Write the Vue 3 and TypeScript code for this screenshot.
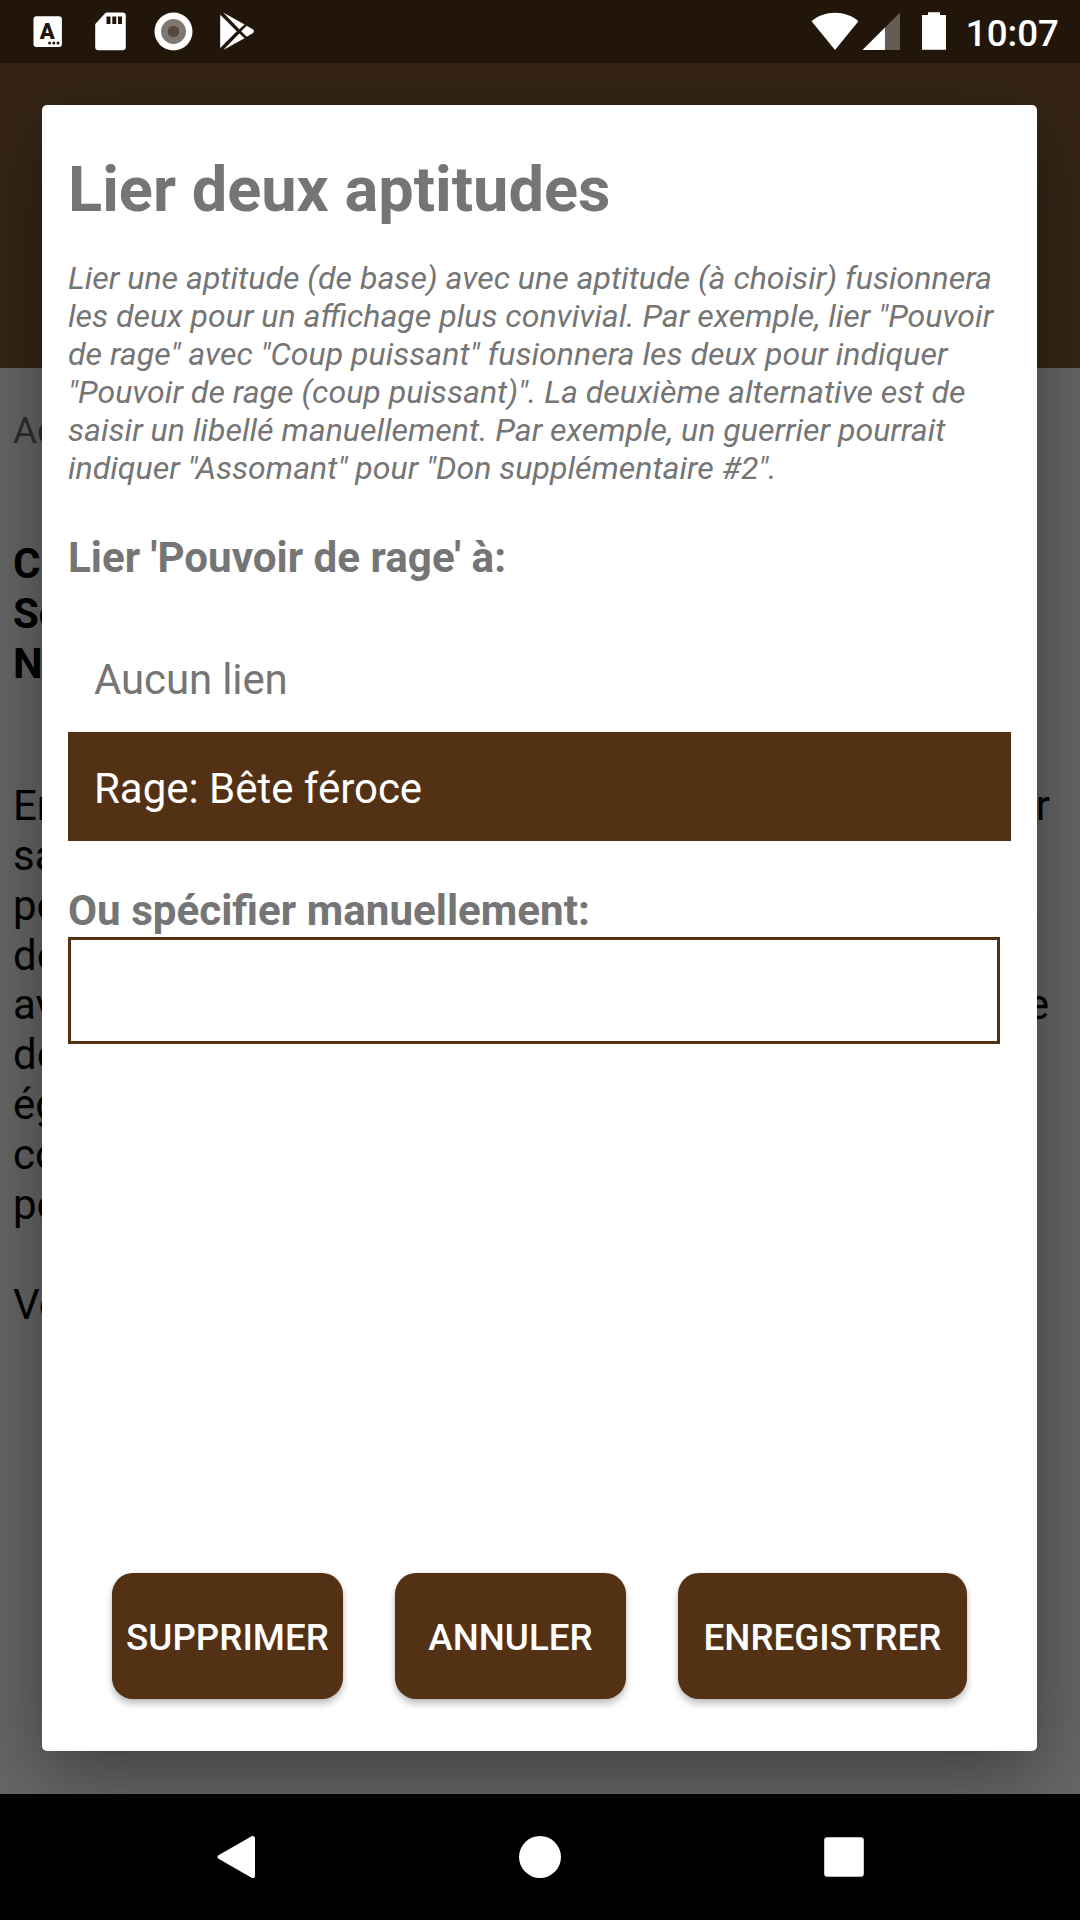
<script setup lang="ts">
import { ref } from 'vue'

interface PageLine {
  start: string
  end?: string
  inset?: string
}

const headings: string[] = ['C', 'So', 'No']

const lines: PageLine[] = [
  { start: 'En', end: 'r', inset: 'inset-r' },
  { start: 'sa' },
  { start: 'po', end: 's', inset: 'inset-s' },
  { start: 'de' },
  { start: 'av', end: 'e', inset: 'inset-e' },
  { start: 'de' },
  { start: 'ég' },
  { start: 'co' },
  { start: 'po' },
  { start: '' },
  { start: 'Vo' },
]

const options: string[] = ['Aucun lien', 'Rage: Bête féroce']
const selected = ref(1)
const manual = ref('')
</script>

<template>
  <div class="screen">
    <header class="status">
      <div class="status-left">
        <svg class="i-lang" width="30" height="32" viewBox="0 0 30 32">
          <rect x="0.5" y="0.3" width="28.4" height="30.6" rx="3" fill="#fff" />
          <text x="14.3" y="22.800" text-anchor="middle" class="lang-letter">A</text>
          <g fill="#22160b">
            <circle cx="16.6" cy="27" r="1.5" />
            <circle cx="20.8" cy="27" r="1.5" />
            <circle cx="25" cy="27" r="1.5" />
          </g>
        </svg>
        <svg class="i-sd" width="31" height="39" viewBox="0 0 31 39">
          <path d="M12 .5H27.500a3.300 3.300 0 0 1 3.300 3.300V35a3.300 3.300 0 0 1-3.300 3.300H3.500A3.300 3.300 0 0 1 .2 35V13q0-1 .8-1.800L10.200 1.300Q11 .5 12 .5Z" fill="#fff" />
          <path d="M11.500 4.500h4v7.500h-4zM17.300 4.500h4v7.500h-4zM23 4.500h4v7.500h-4z" fill="#22160b" />
        </svg>
        <svg class="i-disc" width="39" height="39" viewBox="0 0 39 39">
          <circle cx="19.500" cy="19.500" r="19" fill="#fff" />
          <circle cx="19.500" cy="19.500" r="12.500" fill="#7f7771" />
          <circle cx="19.500" cy="19.500" r="5.800" fill="#544a42" />
        </svg>
        <svg class="i-play" width="35" height="39" viewBox="0 0 35 39" fill="#fff">
          <path d="M.2 2.700 16.800 19.300.2 35.900Z" />
          <path d="M3.200.5 24.600 12.400 19.300 17.200Z" />
          <path d="M3.200 38.100 24.600 26.200 19.300 21.400Z" />
          <path d="M26.700 13.800 32.600 17.300Q35.300 19.300 32.600 21.300L26.700 24.800 21.200 19.300Z" />
        </svg>
      </div>
      <div class="status-right">
        <svg class="i-wifi" width="48" height="38" viewBox="0 0 48 38">
          <path d="M24 38 .6 9.300C7 3.700 15 .8 24 .8s17 2.900 23.400 8.500Z" fill="#fff" />
        </svg>
        <svg class="i-signal" width="38" height="38" viewBox="0 0 38 38">
          <path d="M38 .5V38H.5Z" fill="#655c54" />
          <path d="M23 15.500V38H.5Z" fill="#fff" />
        </svg>
        <svg class="i-battery" width="24" height="38" viewBox="0 0 24 38">
          <path d="M6 .2H18V3H24V37.800H0V3H6Z" fill="#fff" />
        </svg>
        <span class="clock">10:07</span>
      </div>
    </header>

    <main class="page">
      <div class="toolbar"></div>
      <p class="caption">Ac</p>
      <div class="headings">
        <strong v-for="h in headings" :key="h">{{ h }}</strong>
      </div>
      <div class="prose">
        <div v-for="(line, i) in lines" :key="i" class="line" :class="line.inset">
          <span>{{ line.start }}</span>
          <span v-if="line.end">{{ line.end }}</span>
        </div>
      </div>
      <section class="dialog">
        <h1>Lier deux aptitudes</h1>
        <p class="help">
          Lier une aptitude (de base) avec une aptitude (à choisir) fusionnera<br />
          les deux pour un affichage plus convivial. Par exemple, lier "Pouvoir<br />
          de rage" avec "Coup puissant" fusionnera les deux pour indiquer<br />
          "Pouvoir de rage (coup puissant)". La deuxième alternative est de<br />
          saisir un libellé manuellement. Par exemple, un guerrier pourrait<br />
          indiquer "Assomant" pour "Don supplémentaire #2".
        </p>
        <h2>Lier 'Pouvoir de rage' à:</h2>
        <ul class="options">
          <li
            v-for="(option, i) in options"
            :key="option"
            :class="{ active: i === selected }"
            @click="selected = i"
          >{{ option }}</li>
        </ul>
        <h2 class="manual-label">Ou spécifier manuellement:</h2>
        <input v-model="manual" class="manual" type="text" />
        <div class="actions">
          <button type="button">SUPPRIMER</button>
          <button type="button">ANNULER</button>
          <button type="button" class="wide">ENREGISTRER</button>
        </div>
      </section>
    </main>

    <nav class="navbar">
      <svg width="40" height="44" viewBox="0 0 40 44">
        <path d="M1.500 20.300 34.600 1.200Q38 0 38 3.500V40.500Q38 44 34.600 42.800L1.500 23.700Q-.6 22 1.500 20.300Z" fill="#fff" />
      </svg>
      <svg width="44" height="42" viewBox="0 0 44 42">
        <circle cx="21" cy="21" r="21" fill="#fff" />
      </svg>
      <svg width="40" height="40" viewBox="0 0 40 40">
        <rect x="0.2" y="0.2" width="39.600" height="39.600" rx="3" fill="#fff" />
      </svg>
    </nav>
  </div>
</template>

<style>
body {
  margin: 0;
  background: #000;
}
</style>

<style scoped>
.screen {
  width: 1080px;
  height: 1920px;
  display: flex;
  flex-direction: column;
  overflow: hidden;
  font-family: Roboto, "Noto Sans", sans-serif;
}
h1, h2, p, ul {
  margin: 0;
  padding: 0;
}
svg {
  display: block;
  flex: none;
}
.status {
  height: 63px;
  flex: none;
  background: #22160b;
  display: flex;
  justify-content: space-between;
  box-sizing: border-box;
  padding: 12px 21px 0 33px;
}
.status-left,
.status-right {
  display: flex;
  align-items: flex-start;
}
.i-lang { margin-top: 4px; }
.i-sd { margin-left: 32px; }
.i-disc { margin-left: 28px; }
.i-play { margin-left: 27px; }
.i-signal { margin-left: 3px; }
.i-battery { margin-left: 22px; }
.lang-letter {
  font-size: 22px;
  font-weight: 900;
  fill: #22160b;
}
.clock {
  margin: 0 0 0 20px;
  font-size: 36.75px;
  line-height: 43px;
  font-weight: 500;
  color: #fff;
}
.page {
  flex: 1;
  position: relative;
  overflow: hidden;
  background: #666;
  color: #000;
  font-size: 42px;
  line-height: 50px;
}
.toolbar {
  height: 305px;
  background: #362515;
}
.caption {
  margin-top: 41px;
  padding-left: 13px;
  font-size: 36.75px;
  line-height: 43px;
  color: #2e2e2e;
}
.headings {
  margin-top: 87px;
  padding-left: 13px;
  display: flex;
  flex-direction: column;
}
.prose {
  margin-top: 92px;
  padding-left: 13px;
}
.line {
  display: flex;
  justify-content: space-between;
  height: 49.87px;
}
.inset-r { padding-right: 30px; }
.inset-s { padding-right: 41px; }
.inset-e { padding-right: 31px; }
.dialog {
  position: absolute;
  top: 42px;
  left: 42px;
  width: 995px;
  height: 1646px;
  box-sizing: border-box;
  padding: 47px 26px 52px;
  border-radius: 5px;
  background: #fff;
  box-shadow: 0 20px 76px rgba(0, 0, 0, 0.4);
  color: #757575;
  display: flex;
  flex-direction: column;
}
h1 {
  font-size: 63.1px;
  line-height: 74px;
  font-weight: 700;
}
.help {
  margin-top: 33px;
  font-size: 32.09px;
  line-height: 38px;
  font-style: italic;
  white-space: nowrap;
}
h2 {
  margin-top: 46px;
  font-size: 42.15px;
  line-height: 50px;
  font-weight: 700;
}
.options {
  margin-top: 40px;
  list-style: none;
}
.options li {
  padding: 32px 26px 27px;
  letter-spacing: -0.14px;
}
.options li.active {
  background: #533114;
  color: #fff;
  letter-spacing: -0.02px;
}
.manual-label {
  margin-top: 45px;
}
.manual {
  margin: 1px 11px 0 0;
  height: 107px;
  box-sizing: border-box;
  border: 3px solid #533114;
  border-radius: 0;
  padding: 0 24px;
  background: #fff;
  font: inherit;
  color: inherit;
  outline: none;
}
.actions {
  margin-top: auto;
  display: flex;
  justify-content: center;
  gap: 52px;
}
.actions button {
  width: 231px;
  height: 126px;
  padding: 2px 0 0;
  border: 0;
  border-radius: 21px;
  background: #533114;
  box-shadow: 0 5px 7px rgba(0, 0, 0, 0.24), 0 0 3px rgba(0, 0, 0, 0.1);
  color: #fff;
  font-family: inherit;
  font-size: 36.75px;
  font-weight: 500;
  line-height: 43px;
}
.actions button.wide {
  width: 289px;
}
.navbar {
  height: 126px;
  flex: none;
  box-sizing: border-box;
  padding: 0 216px 0 217px;
  background: #000;
  display: flex;
  align-items: center;
  justify-content: space-between;
}
</style>
